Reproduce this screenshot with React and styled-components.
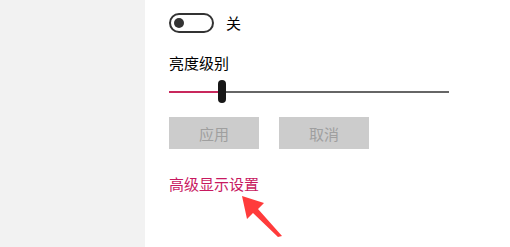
import styled, { createGlobalStyle } from "styled-components";

const GlobalStyle = createGlobalStyle`
  html, body { margin: 0; padding: 0; background: #fff; }
  body { font-family: "Noto Sans CJK SC", "Noto Sans", sans-serif; }
`;

// mise en page generale
const Page = styled.div`
  display: flex;
  width: 510px;
  height: 247px;
  overflow: hidden;
`;

const Sidebar = styled.div`
  width: 145px;
  flex-shrink: 0;
  background: #f2f2f2;
`;

const Content = styled.div`
  position: relative;
  flex: 1;
  padding: 13px 0 0 24px;
  display: flex;
  flex-direction: column;
`;

const ToggleRow = styled.div`
  display: flex;
  align-items: center;
  gap: 12px;
  height: 20px;
`;

const Toggle = styled.div`
  box-sizing: border-box;
  width: 45px;
  height: 20px;
  border: 2px solid #333;
  border-radius: 10px;
  display: flex;
  align-items: center;
  padding-left: 3px;
  &::before {
    content: "";
    width: 10px;
    height: 10px;
    border-radius: 50%;
    background: #333;
  }
`;

const Text = styled.span`
  font-size: 15px;
  line-height: 20px;
  color: ${(p) => p.color || "#000"};
`;

const Label = styled(Text)`
  margin-top: 20px;
`;

const Slider = styled.div`
  position: relative;
  width: 280px;
  height: 23px;
  margin-top: 7px;
  display: flex;
  align-items: center;
`;

const Track = styled.div`
  height: 2px;
  background: ${(p) => p.color};
  width: ${(p) => (p.grow ? "auto" : `${p.w}px`)};
  flex: ${(p) => (p.grow ? 1 : "none")};
`;

const Thumb = styled.div`
  width: 8px;
  height: 23px;
  border-radius: 4px;
  background: #171717;
`;

const Buttons = styled.div`
  display: flex;
  gap: 20px;
  margin-top: 14px;
`;

const Button = styled.div`
  width: 90px;
  height: 32px;
  background: #cccccc;
  color: #9f9f9f;
  font-size: 15px;
  display: flex;
  align-items: center;
  justify-content: center;
`;

const LinkText = styled(Text)`
  margin-top: 25px;
  color: #c8195f;
`;

// fleche rouge d'annotation
const Arrow = styled.svg`
  position: absolute;
  left: 0;
  top: 0;
  pointer-events: none;
`;

export default function App() {
  return (
    <>
      <GlobalStyle />
      <Page>
        <Sidebar />
        <Content>
          <ToggleRow>
            <Toggle />
            <Text>关</Text>
          </ToggleRow>
          <Label>亮度级别</Label>
          <Slider>
            <Track color="#c8285c" w={49} />
            <Thumb />
            <Track color="#666666" grow />
          </Slider>
          <Buttons>
            <Button>应用</Button>
            <Button>取消</Button>
          </Buttons>
          <LinkText>高级显示设置</LinkText>
          <Arrow width="365" height="247" viewBox="145 0 365 247">
            <polygon
              points="242,196 264,203 258,209 282,236 278,237 253,213 247,219"
              fill="#ff3b3b"
            />
          </Arrow>
        </Content>
      </Page>
    </>
  );
}
